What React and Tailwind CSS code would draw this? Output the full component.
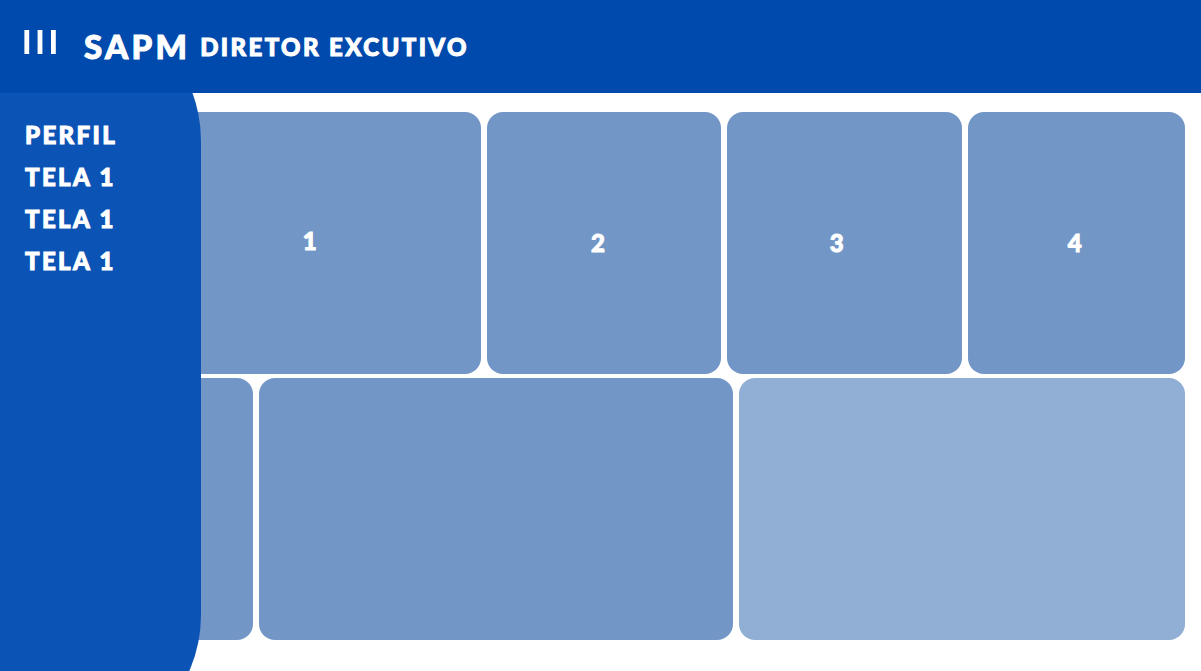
const links = ['PERFIL', 'TELA 1', 'TELA 1', 'TELA 1'];

function Card({ className = '', children }) {
  return (
    <section
      className={`flex items-center justify-center rounded-2xl text-2xl font-black text-white ${className}`}
    >
      {children}
    </section>
  );
}

export default function App() {
  return (
    <div className="flex min-h-screen flex-col bg-white font-['Lato',sans-serif] [-webkit-text-stroke:1px_white]">
      <header className="flex h-[93px] items-center bg-[#004aad] px-6 text-white">
        <button type="button" aria-label="Menu" className="mb-2.5 shrink-0">
          <svg width="32" height="24" viewBox="0 0 32 24" fill="currentColor" aria-hidden="true">
            <rect x="0.4" width="4.8" height="24" />
            <rect x="13.6" width="4.8" height="24" />
            <rect x="27" width="4.8" height="24" />
          </svg>
        </button>
        <h1 className="ml-7 flex items-center gap-2.5 whitespace-nowrap font-black">
          <span className="text-[33px] tracking-widest">SAPM</span>
          <span className="text-2xl tracking-widest">DIRETOR EXCUTIVO</span>
        </h1>
      </header>

      <div className="flex flex-1">
        <aside className="z-10 flex w-[201px] shrink-0 flex-col overflow-hidden">
          <nav className="-mt-[92px] -mb-[84px] flex-1 rounded-r-[140px] bg-[#0b53b5] pt-[113px] pl-[25px]">
            <ul>
              {links.map((label, index) => (
                <li key={index}>
                  <a
                    href="#"
                    className="block text-2xl leading-[42px] font-black tracking-widest text-white"
                  >
                    {label}
                  </a>
                </li>
              ))}
            </ul>
          </nav>
        </aside>

        <main className="-ml-[62px] flex flex-1 flex-col gap-1 pt-[19px] pr-4 pb-[31px]">
          <div className="grid flex-1 grid-cols-[342fr_235fr_235fr_217fr] gap-1.5">
            <Card className="bg-[#7296c6] pb-1">1</Card>
            <Card className="bg-[#7296c6] pr-3">2</Card>
            <Card className="bg-[#7296c6] pr-4">3</Card>
            <Card className="bg-[#7296c6] pr-1">4</Card>
          </div>
          <div className="grid flex-1 grid-cols-[114fr_474fr_446fr] gap-1.5">
            <Card className="bg-[#7296c6]" />
            <Card className="bg-[#7296c6]" />
            <Card className="bg-[#91aed5]" />
          </div>
        </main>
      </div>
    </div>
  );
}
